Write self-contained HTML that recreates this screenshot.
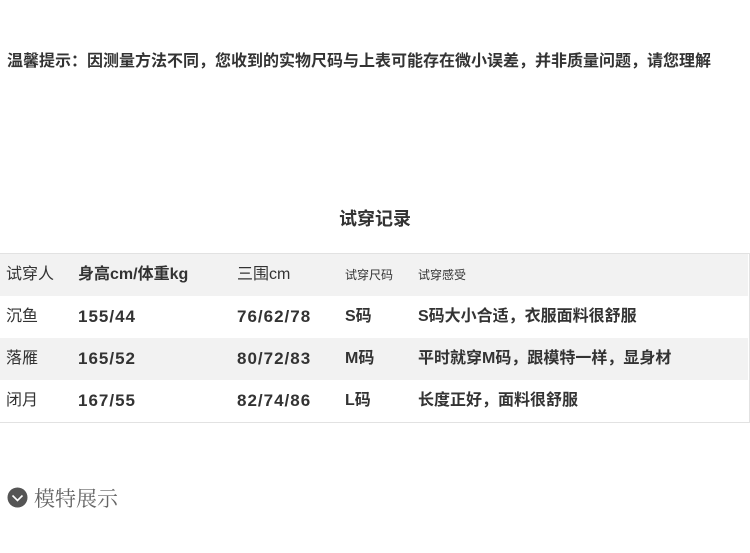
<!DOCTYPE html>
<html><head><meta charset="utf-8"><style>
body{margin:0;width:750px;height:553px;background:#fff;font-family:"Liberation Sans","Noto Sans CJK SC",sans-serif;color:#333;position:relative;overflow:hidden}
.a{position:absolute;white-space:nowrap}
.tip{left:7px;top:47px;font-size:16px;color:#333;font-weight:bold}
.title{left:0;width:750px;text-align:center;top:205px;font-size:18px;font-weight:bold;color:#333}
.tbl{position:absolute;left:0;top:253px;width:750px;height:170px;border:1px solid #e2e2e2;border-left:none;box-sizing:border-box}
.row{position:absolute;left:0;width:748px;height:42px}
.c{position:absolute;top:0;line-height:42px;font-size:16px;font-weight:bold;color:#333}
.n{letter-spacing:1px;font-size:17px}
</style></head><body>
<div class="a tip">温馨提示：因测量方法不同，您收到的实物尺码与上表可能存在微小误差，并非质量问题，请您理解</div>
<div class="a title">试穿记录</div>
<div class="tbl"></div>
<div class="row" style="top:254px;height:42px;background:#f2f2f2">
<span class="c" style="left:6px;font-weight:normal">试穿人</span>
<span class="c" style="left:78px">身高cm/体重kg</span>
<span class="c" style="left:237px;font-weight:normal">三围cm</span>
<span class="c" style="left:345px;font-size:12px;font-weight:normal">试穿尺码</span>
<span class="c" style="left:418px;font-size:12px;font-weight:normal">试穿感受</span>
</div>
<div class="row" style="top:296px">
<span class="c" style="left:6px;font-weight:normal">沉鱼</span><span class="c n" style="left:78px">155/44</span><span class="c n" style="left:237px">76/62/78</span><span class="c" style="left:345px">S码</span><span class="c" style="left:418px">S码大小合适，衣服面料很舒服</span>
</div>
<div class="row" style="top:338px;background:#f2f2f2">
<span class="c" style="left:6px;font-weight:normal">落雁</span><span class="c n" style="left:78px">165/52</span><span class="c n" style="left:237px">80/72/83</span><span class="c" style="left:345px">M码</span><span class="c" style="left:418px">平时就穿M码，跟模特一样，显身材</span>
</div>
<div class="row" style="top:380px">
<span class="c" style="left:6px;font-weight:normal">闭月</span><span class="c n" style="left:78px">167/55</span><span class="c n" style="left:237px">82/74/86</span><span class="c" style="left:345px">L码</span><span class="c" style="left:418px">长度正好，面料很舒服</span>
</div>
<svg class="a" style="left:7px;top:487px" width="21" height="21" viewBox="0 0 21 21"><circle cx="10.5" cy="10.5" r="10" fill="#555"/><path d="M5.5 8.5 L10.5 13.5 L15.5 8.5" stroke="#fff" stroke-width="1.6" fill="none"/></svg>
<div class="a" style="left:34px;top:483px;font-size:21px;color:#666;font-family:'Liberation Serif','Noto Serif CJK SC',serif">模特展示</div>
</body></html>
